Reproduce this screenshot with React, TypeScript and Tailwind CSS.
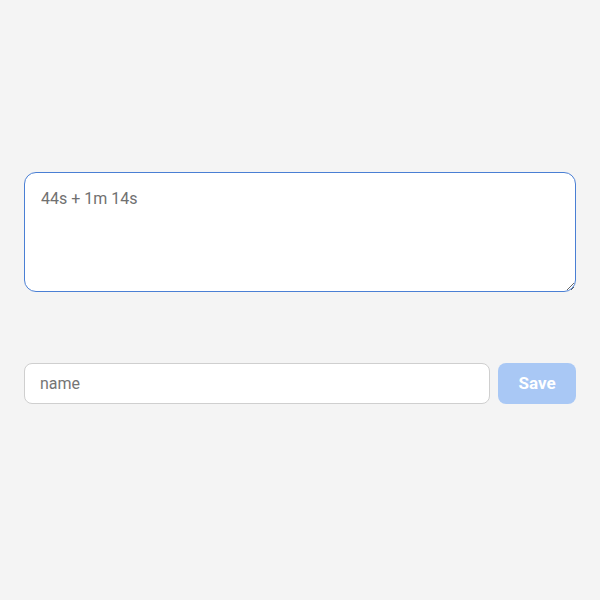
import React from "react";

export default function App() {
  return (
    <div className="min-h-[600px] w-[600px] bg-[#f4f4f4] px-6 pt-[172px] font-['Roboto','Noto_Sans',sans-serif]">
      <textarea
        defaultValue="44s + 1m 14s"
        className="block h-[120px] w-full resize-y rounded-[12px] border border-[#4a7fd4] bg-white px-4 py-[14px] font-['Roboto','Noto_Sans',sans-serif] text-[16px] leading-6 text-[#707070] outline-none"
      />
      <div className="mt-[71px] flex gap-2">
        <input
          placeholder="name"
          className="h-[41px] flex-1 rounded-[8px] border border-[#cfcfcf] bg-white px-[15px] font-['Roboto','Noto_Sans',sans-serif] text-[16px] text-[#555] outline-none placeholder:text-[#757575]"
        />
        <button className="h-[41px] w-[78px] rounded-[8px] bg-[#a9c8f5] font-['Roboto','Noto_Sans',sans-serif] text-[17px] font-bold text-white">
          Save
        </button>
      </div>
    </div>
  );
}
